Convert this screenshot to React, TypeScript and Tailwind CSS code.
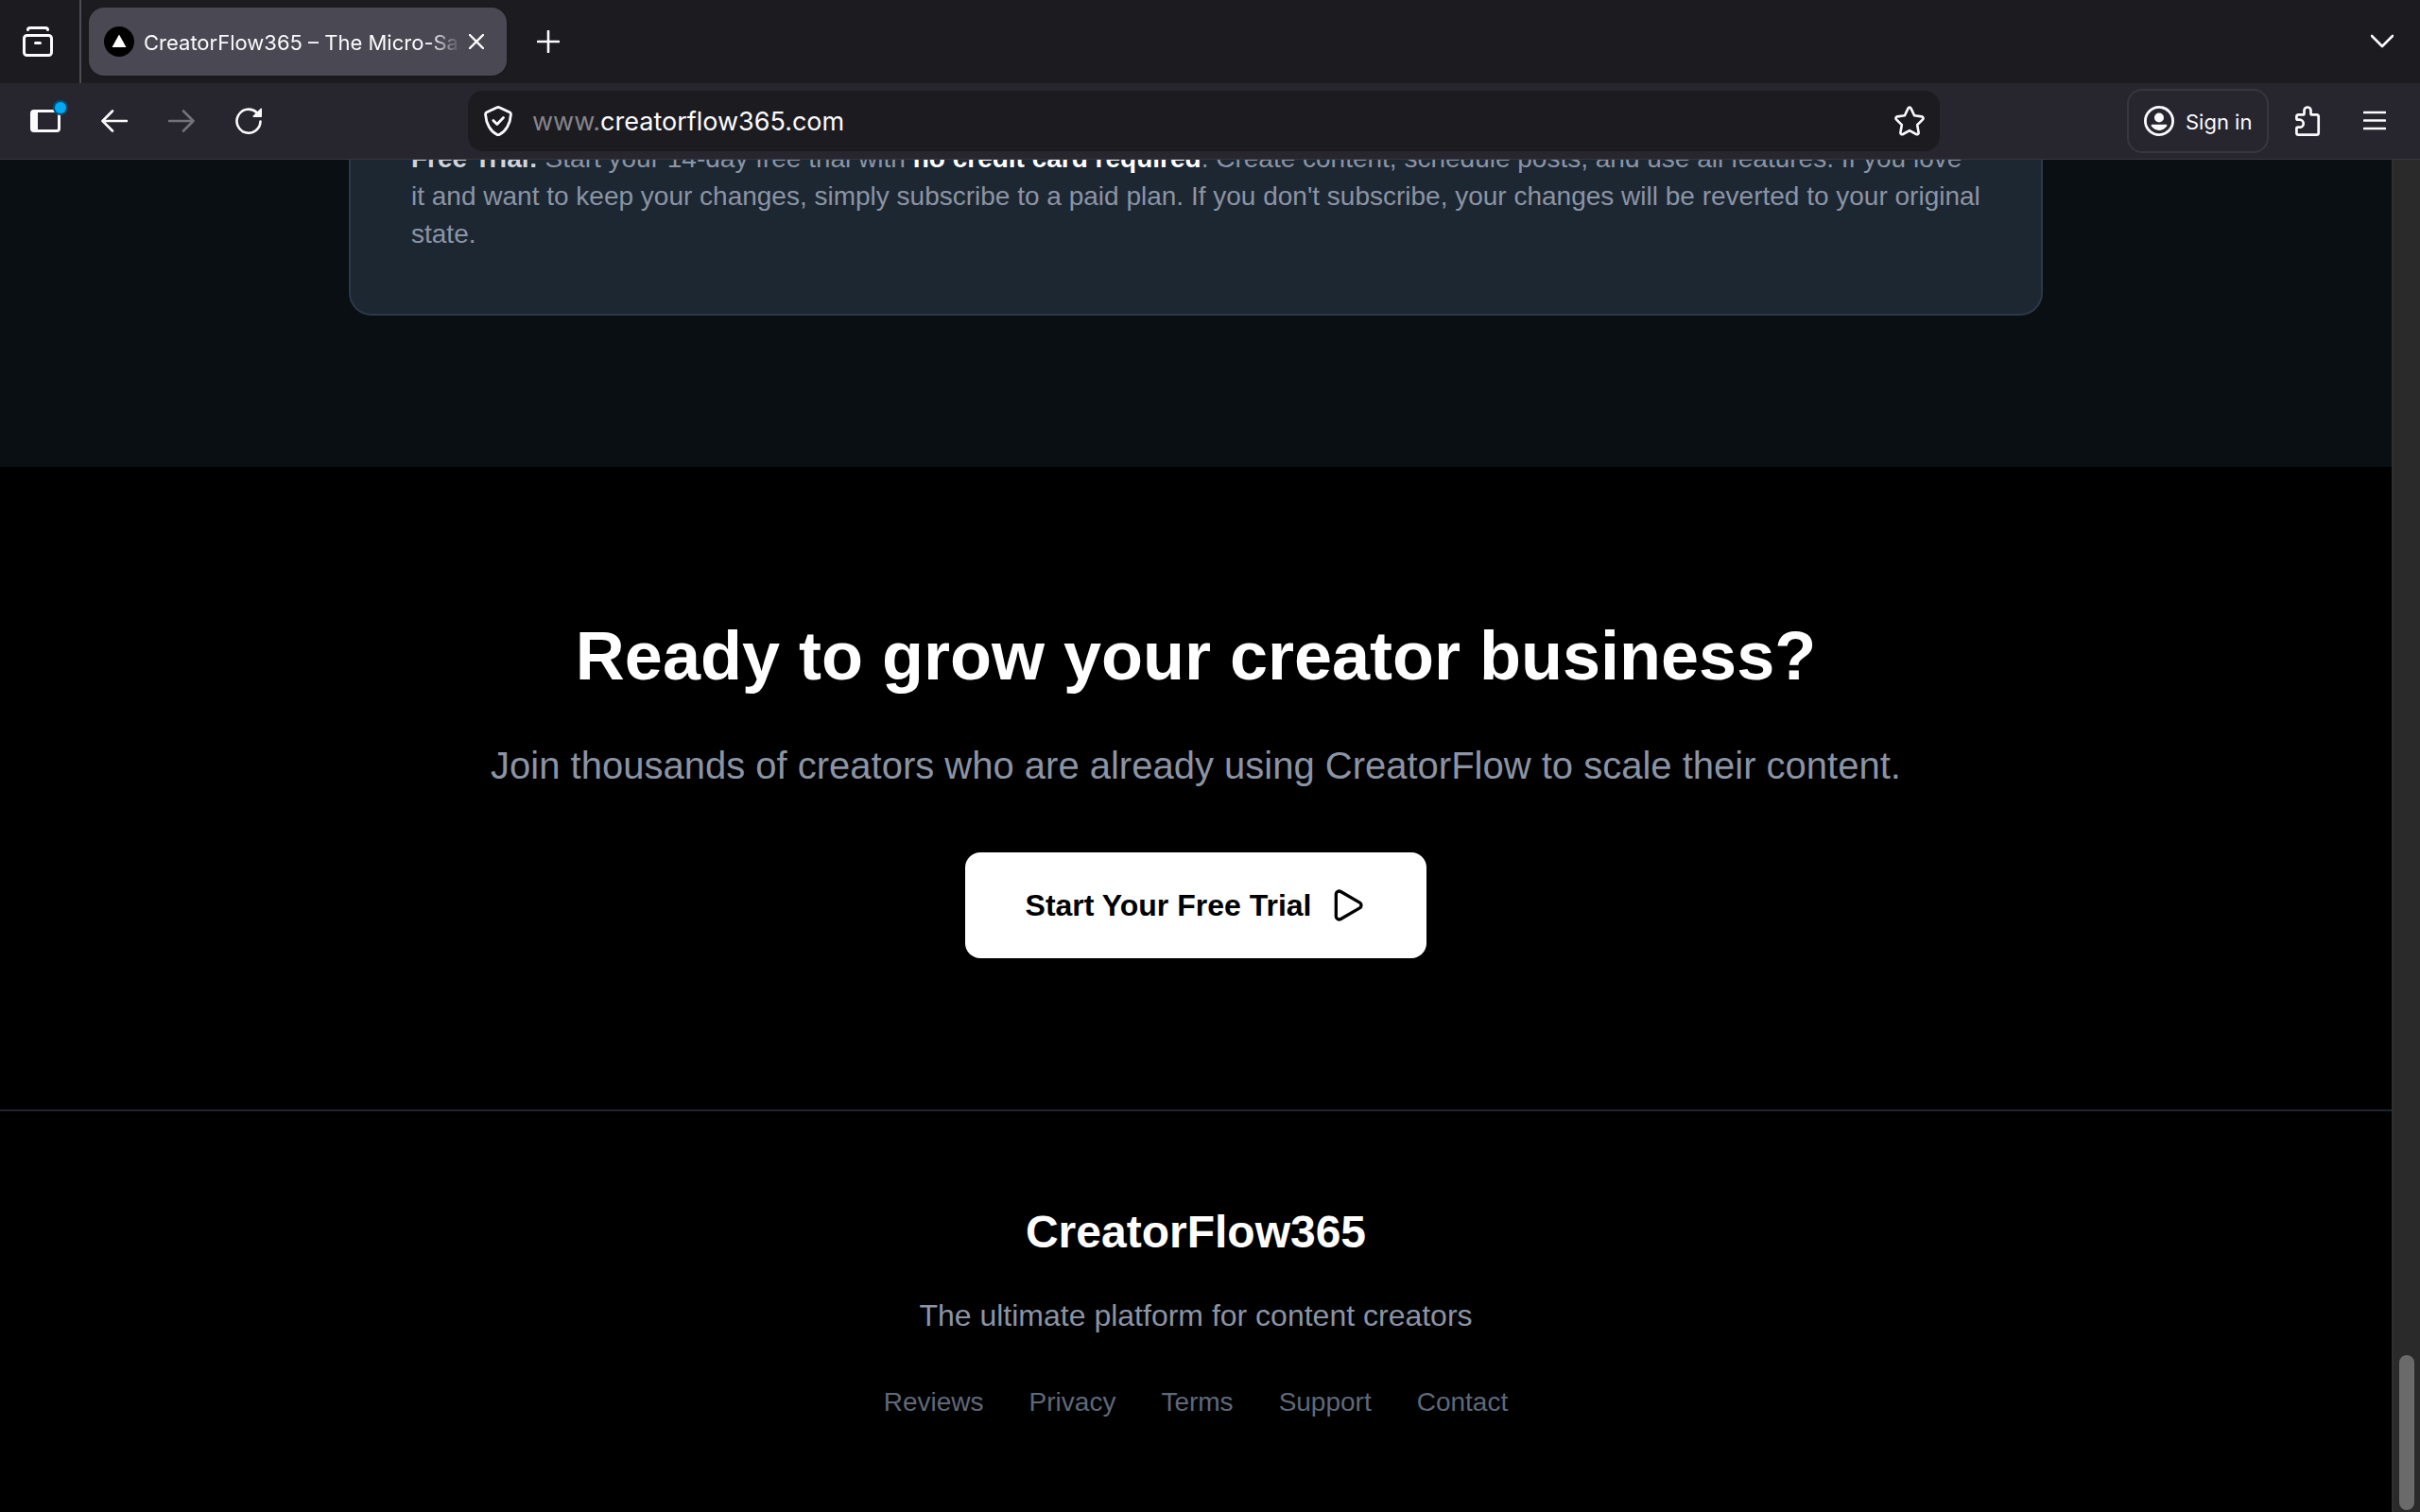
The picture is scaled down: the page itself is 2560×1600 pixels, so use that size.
import React from "react";
import { Play } from "lucide-react";

type IconProps = { className?: string };

const TabOverviewIcon = ({ className }: IconProps) => (
  <svg className={className} viewBox="0 0 32 32" fill="none" stroke="currentColor" strokeWidth="3" strokeLinecap="round" strokeLinejoin="round">
    <path d="M5.500 3.500C5.500 2.300 6.500 1.500 7.700 1.500H24.300C25.500 1.500 26.500 2.300 26.500 3.500" />
    <rect x="1.500" y="9.500" width="29" height="21" rx="3" />
    <path d="M13.500 17.500h5" />
  </svg>
);

const SidebarIcon = ({ className }: IconProps) => (
  <svg className={className} viewBox="0 0 32 24" fill="none">
    <rect x="1.500" y="1.500" width="29" height="21" rx="2.500" stroke="currentColor" strokeWidth="3" />
    <path d="M2 2h6v20H2z" fill="currentColor" />
  </svg>
);

const ArrowIcon = ({ className }: IconProps) => (
  <svg className={className} viewBox="0 0 28 24" fill="none" stroke="currentColor" strokeWidth="2.600" strokeLinecap="round" strokeLinejoin="round">
    <path d="M12 1.500L1.500 12L12 22.500M1.500 12H27" />
  </svg>
);

const ReloadIcon = ({ className }: IconProps) => (
  <svg className={className} viewBox="0 0 28 28" fill="none">
    <path d="M26.500 14.500A12.500 12.500 0 1 1 22.500 5" stroke="currentColor" strokeWidth="2.600" strokeLinecap="round" />
    <path d="M27 0.500c.6 0 1 .4 1 1V9c0 .6-.4 1-1 1h-7.500c-.9 0-1.300-1-.7-1.600z" fill="currentColor" />
  </svg>
);

const ShieldIcon = ({ className }: IconProps) => (
  <svg className={className} viewBox="0 0 30 32" fill="none" stroke="currentColor" strokeWidth="2.800" strokeLinecap="round" strokeLinejoin="round">
    <path d="M13.700 1.800a3 3 0 0 1 2.600 0L26.500 6.500a2.800 2.800 0 0 1 1.900 2.900C27.800 19 23 27 16.500 30.200a3 3 0 0 1-3 0C7 27 2.200 19 1.600 9.400A2.800 2.800 0 0 1 3.500 6.500z" />
    <path d="M9.800 15.500l4 4 6.700-7" />
  </svg>
);

const StarIcon = ({ className }: IconProps) => (
  <svg className={className} viewBox="0 0 32 32" fill="none" stroke="currentColor" strokeWidth="2.600" strokeLinejoin="round">
    <path d="M14.500 2.600c.6-1.300 2.400-1.300 3 0l3.600 7.700 7.900 1.100c1.500.2 2 1.900 1 2.900l-5.800 5.900 1.400 8c.2 1.500-1.300 2.500-2.600 1.800L16 26.100l-7 3.900c-1.300.7-2.800-.3-2.600-1.800l1.400-8L2 14.300c-1-1-.5-2.700 1-2.900l7.900-1.100z" />
  </svg>
);

const AccountIcon = ({ className }: IconProps) => (
  <svg className={className} viewBox="0 0 32 32" fill="none">
    <circle cx="16" cy="16" r="14.600" stroke="currentColor" strokeWidth="2.800" />
    <circle cx="16" cy="12.500" r="5" fill="currentColor" />
    <path d="M8.800 19.800h14.400c1 0 1.500.9 1 1.800a10 10 0 0 1-16.400 0c-.5-.9 0-1.800 1-1.800z" fill="currentColor" />
  </svg>
);

const ExtensionsIcon = ({ className }: IconProps) => (
  <svg className={className} viewBox="0 0 28 32" fill="none" stroke="currentColor" strokeWidth="2.700" strokeLinejoin="round">
    <path d="M3.500 9.400h4.500c.8 0 1.500-.7 1.500-1.500V5a3.500 3.500 0 0 1 7 0v2.900c0 .8.700 1.500 1.500 1.500h4.500c1.300 0 2.200 1 2.200 2.200v16.800c0 1.300-1 2.200-2.200 2.200H3.500c-1.200 0-2.100-.9-2.100-2.200v-4.200c0-.8.600-1.500 1.500-1.500h1.800a4 4 0 0 0 0-8H2.900c-.9 0-1.500-.7-1.500-1.500v-1.600c0-1.300.9-2.200 2.100-2.200z" />
  </svg>
);

const footerLinks = ["Reviews", "Privacy", "Terms", "Support", "Contact"];

const TabStrip = () => (
  <div className="flex h-22 items-center bg-[#1c1b20] pr-6">
    <div className="flex h-full w-[86px] items-center border-r-2 border-[#4d4c52] pl-6">
      <button aria-label="Tab overview">
        <TabOverviewIcon className="h-8 w-8" />
      </button>
    </div>
    <div className="ml-2 flex h-18 w-[442px] items-center rounded-2xl bg-[#4a4852] pr-6 pl-4 shadow">
      <svg className="h-8 w-8 shrink-0" viewBox="0 0 32 32">
        <circle cx="16" cy="16" r="16" fill="#000" />
        <path d="M16 8.500L23.500 22h-15z" fill="#fff" />
      </svg>
      <span className="ml-2.5 min-w-0 flex-1 overflow-hidden mask-r-from-90% pt-0.5 text-[22px] whitespace-nowrap">
        CreatorFlow365 – The Micro-SaaS for Creators
      </span>
      <button aria-label="Close tab" className="ml-2">
        <svg className="h-4 w-4" viewBox="0 0 16 16" stroke="currentColor" strokeWidth="2.400" strokeLinecap="round">
          <path d="M1 1l14 14M15 1L1 15" />
        </svg>
      </button>
    </div>
    <button aria-label="New tab" className="ml-8">
      <svg className="h-6 w-6" viewBox="0 0 24 24" stroke="currentColor" strokeWidth="2.600" strokeLinecap="round">
        <path d="M12 1v22M1 12h22" />
      </svg>
    </button>
    <button aria-label="List all tabs" className="mr-1 ml-auto">
      <svg className="h-6 w-6" viewBox="0 0 24 24" fill="none" stroke="currentColor" strokeWidth="2.600" strokeLinecap="round" strokeLinejoin="round">
        <path d="M1 6l11 11L23 6" />
      </svg>
    </button>
  </div>
);

const Toolbar = () => (
  <div className="flex h-[81px] items-center border-b border-[#38373c] bg-[#27252e] pr-9 pl-8">
    <div className="flex w-[463px] items-center gap-[43px]">
      <button aria-label="Sidebars" className="relative">
        <SidebarIcon className="h-6 w-8" />
        <span className="absolute -top-2 -right-1.5 h-3 w-3 rounded-full bg-[#00aaf5] ring-2 ring-[#0a4f70]" />
      </button>
      <button aria-label="Back">
        <ArrowIcon className="h-6 w-7" />
      </button>
      <button aria-label="Forward" disabled className="text-[#737179]">
        <ArrowIcon className="h-6 w-7 rotate-180" />
      </button>
      <button aria-label="Reload">
        <ReloadIcon className="h-7 w-7" />
      </button>
    </div>
    <div className="flex h-16 flex-1 items-center rounded-2xl bg-[#1c1b20] px-4">
      <ShieldIcon className="h-8 w-8" />
      <p className="ml-5 flex-1 pt-0.5 text-[27px] text-[#86858a]">
        www.<span className="text-[#fbfbfe]">creatorflow365.com</span>
      </p>
      <button aria-label="Bookmark this page">
        <StarIcon className="h-8 w-8" />
      </button>
    </div>
    <div className="ml-[198px] flex items-center">
      <button className="flex h-[68px] w-[150px] items-center gap-3 rounded-2xl border-2 border-[#38373d] pl-4 text-[22px]">
        <AccountIcon className="h-8 w-8" />
        <span className="pt-0.5">Sign in</span>
      </button>
      <button aria-label="Extensions" className="ml-7">
        <ExtensionsIcon className="h-8 w-7" />
      </button>
      <button aria-label="Open application menu" className="ml-11">
        <svg className="h-6 w-6" viewBox="0 0 24 24" stroke="currentColor" strokeWidth="2.600" strokeLinecap="round">
          <path d="M1 3h22M1 11.500h22M1 20h22" />
        </svg>
      </button>
    </div>
  </div>
);

export default function App() {
  return (
    <div className="flex h-screen flex-col overflow-hidden bg-black font-['Liberation_Sans',Arial,sans-serif]">
      <header className="shrink-0 font-[Inter,sans-serif] text-[#fbfbfe]">
        <TabStrip />
        <Toolbar />
      </header>

      <div className="flex min-h-0 flex-1">
        {/* page is scrolled to the very bottom */}
        <main className="flex min-w-0 flex-1 flex-col justify-end overflow-hidden text-center">
          <section className="shrink-0 bg-[#0a0f13] pb-40">
            <div className="mx-auto max-w-[1792px] rounded-3xl border-2 border-[#2d374a] bg-[#1d2732] p-16 text-left">
              <p className="text-[28px] leading-10 text-[#8b94a5]">
                <strong className="text-[#d1d5db]">Free Trial:</strong> Start your 14-day free trial with{" "}
                <strong className="text-white">no credit card required</strong>. Create content, schedule posts, and
                use all features. If you love it and want to keep your changes, simply subscribe to a paid plan. If you
                don't subscribe, your changes will be reverted to your original state.
              </p>
            </div>
          </section>

          <section className="shrink-0 px-8 py-40">
            <h2 className="text-7xl leading-20 font-bold text-white">Ready to grow your creator business?</h2>
            <p className="mt-12 text-[40px] leading-14 text-[#8b94a5]">
              Join thousands of creators who are already using CreatorFlow to scale their content.
            </p>
            <button className="mx-auto mt-16 flex items-center gap-[18px] rounded-2xl bg-white px-16 py-8 text-[32px] leading-12 font-bold text-black">
              Start Your Free Trial
              <Play size={40} />
            </button>
          </section>

          <footer className="shrink-0 border-t-2 border-[#1d2732] px-8 py-24">
            <h3 className="text-5xl leading-16 font-bold text-white">CreatorFlow365</h3>
            <p className="mt-8 text-[32px] leading-12 text-[#8b94a5]">The ultimate platform for content creators</p>
            <nav className="mt-12 flex justify-center gap-12 text-[28px] leading-10 text-[#5f6878]">
              {footerLinks.map((label) => (
                <a key={label} href="#">
                  {label}
                </a>
              ))}
            </nav>
          </footer>
        </main>

        <div className="flex w-[30px] flex-col justify-end border-l-2 border-[#303030] bg-[#2a2a2a] pb-0.5 pl-1.5">
          <div className="h-41 w-4 rounded-full bg-[#6a6a6a]" />
        </div>
      </div>
    </div>
  );
}
